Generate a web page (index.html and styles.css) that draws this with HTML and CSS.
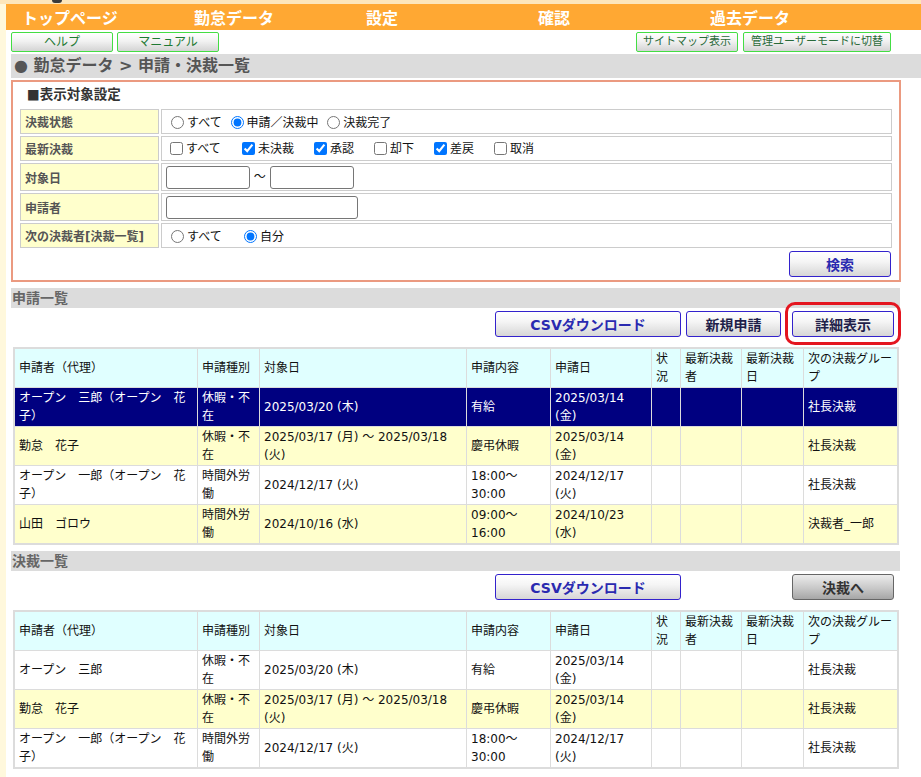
FILE: index.html
```html
<!DOCTYPE html>
<html lang="ja">
<head>
<meta charset="utf-8">
<title>申請・決裁一覧</title>
<link rel="stylesheet" href="styles.css">
</head>
<body>
<div class="topstrip"><span class="logo-tail"></span></div>
<div class="page">
  <nav class="gnav">
    <a href="#">トップページ</a>
    <a href="#">勤怠データ</a>
    <a href="#">設定</a>
    <a href="#">確認</a>
    <a href="#">過去データ</a>
  </nav>
  <div class="content">
    <div class="toolbar">
      <div class="grp">
        <button class="btn-green">ヘルプ</button>
        <button class="btn-green">マニュアル</button>
      </div>
      <div class="grp right">
        <button class="btn-green">サイトマップ表示</button>
        <button class="btn-green wide">管理ユーザーモードに切替</button>
      </div>
    </div>
    <div class="crumb">● 勤怠データ &gt; 申請・決裁一覧</div>

    <div class="filter-box">
      <div class="filter-title">■表示対象設定</div>
      <table class="filter">
        <tr>
          <th>決裁状態</th>
          <td><label><input type="radio" name="st">すべて</label> <label><input type="radio" name="st" checked>申請／決裁中</label> <label><input type="radio" name="st">決裁完了</label></td>
        </tr>
        <tr>
          <th>最新決裁</th>
          <td><label class="opt opt-3"><input type="checkbox">すべて</label><label class="opt opt-3"><input type="checkbox" checked>未決裁</label><label class="opt opt-2"><input type="checkbox" checked>承認</label><label class="opt opt-2"><input type="checkbox">却下</label><label class="opt opt-2"><input type="checkbox" checked>差戻</label><label class="opt opt-2"><input type="checkbox">取消</label></td>
        </tr>
        <tr class="tall">
          <th>対象日</th>
          <td><input type="text" class="txt date"> ～ <input type="text" class="txt date"></td>
        </tr>
        <tr class="tall">
          <th>申請者</th>
          <td><input type="text" class="txt name"></td>
        </tr>
        <tr>
          <th>次の決裁者[決裁一覧]</th>
          <td><label class="opt opt-r"><input type="radio" name="nx">すべて</label><label><input type="radio" name="nx" checked>自分</label></td>
        </tr>
      </table>
      <div class="search-row"><button class="btn-blue w102">検索</button></div>
    </div>

    <div class="sec-bar">申請一覧</div>
    <div class="btn-row">
      <button class="btn-blue w186 gap5">CSVダウンロード</button>
      <button class="btn-blue btn-dark w95 gap11">新規申請</button>
      <button class="btn-blue btn-dark w102">詳細表示</button>
      <span class="highlight"></span>
    </div>
    <table class="list">
      <colgroup>
        <col class="col-name"><col class="col-type"><col class="col-date"><col class="col-content"><col class="col-applied"><col class="col-status"><col class="col-approver"><col class="col-approved"><col class="col-next">
      </colgroup>
      <tr>
        <th>申請者（代理）</th><th>申請種別</th><th>対象日</th><th>申請内容</th><th>申請日</th><th>状況</th><th>最新決裁者</th><th>最新決裁日</th><th>次の決裁グループ</th>
      </tr>
      <tr class="sel">
        <td>オープン　三郎（オープン　花子）</td><td>休暇・不在</td><td>2025/03/20 (木)</td><td>有給</td><td>2025/03/14 (金)</td><td></td><td></td><td></td><td>社長決裁</td>
      </tr>
      <tr class="even">
        <td>勤怠　花子</td><td>休暇・不在</td><td>2025/03/17 (月) ～ 2025/03/18 (火)</td><td>慶弔休暇</td><td>2025/03/14 (金)</td><td></td><td></td><td></td><td>社長決裁</td>
      </tr>
      <tr class="odd">
        <td>オープン　一郎（オープン　花子）</td><td>時間外労働</td><td>2024/12/17 (火)</td><td>18:00～30:00</td><td>2024/12/17 (火)</td><td></td><td></td><td></td><td>社長決裁</td>
      </tr>
      <tr class="even">
        <td>山田　ゴロウ</td><td>時間外労働</td><td>2024/10/16 (水)</td><td>09:00～16:00</td><td>2024/10/23 (水)</td><td></td><td></td><td></td><td>決裁者_一郎</td>
      </tr>
    </table>

    <div class="sec-bar">決裁一覧</div>
    <div class="btn-row">
      <button class="btn-blue w186 gap111">CSVダウンロード</button>
      <button class="btn-gray w102">決裁へ</button>
    </div>
    <table class="list">
      <colgroup>
        <col class="col-name"><col class="col-type"><col class="col-date"><col class="col-content"><col class="col-applied"><col class="col-status"><col class="col-approver"><col class="col-approved"><col class="col-next">
      </colgroup>
      <tr>
        <th>申請者（代理）</th><th>申請種別</th><th>対象日</th><th>申請内容</th><th>申請日</th><th>状況</th><th>最新決裁者</th><th>最新決裁日</th><th>次の決裁グループ</th>
      </tr>
      <tr class="odd">
        <td>オープン　三郎</td><td>休暇・不在</td><td>2025/03/20 (木)</td><td>有給</td><td>2025/03/14 (金)</td><td></td><td></td><td></td><td>社長決裁</td>
      </tr>
      <tr class="even">
        <td>勤怠　花子</td><td>休暇・不在</td><td>2025/03/17 (月) ～ 2025/03/18 (火)</td><td>慶弔休暇</td><td>2025/03/14 (金)</td><td></td><td></td><td></td><td>社長決裁</td>
      </tr>
      <tr class="odd">
        <td>オープン　一郎（オープン　花子）</td><td>時間外労働</td><td>2024/12/17 (火)</td><td>18:00～30:00</td><td>2024/12/17 (火)</td><td></td><td></td><td></td><td>社長決裁</td>
      </tr>
    </table>
  </div>
</div>
</body>
</html>
```

FILE: styles.css
```css
* { box-sizing: border-box; }
html, body { margin: 0; padding: 0; }
body {
  background: #fff8dc;
  font-family: "DejaVu Sans", "Noto Sans CJK JP", sans-serif;
  font-size: 12px;
  color: #111;
  overflow: hidden;
}
button, input { font-family: inherit; }

.topstrip { height: 4px; background: #fde6bb; position: relative; }
.logo-tail {
  position: absolute; left: 52px; top: 0;
  width: 10px; height: 3px; background: #3a3a3a;
  border-radius: 0 0 5px 5px;
}

.page { margin-left: 6px; background: #fff; min-height: 773px; }

.gnav { display: flex; height: 26px; background: #ffa833; }
.gnav a {
  width: 172px; padding: 3px 0 0 16px;
  color: #fff; font-weight: bold; font-size: 16px; line-height: 23px;
  text-decoration: none;
}

.content { padding-left: 5px; }

.toolbar { display: flex; justify-content: space-between; width: 890px; margin-top: 2px; height: 20px; }
.grp { display: flex; gap: 4px; }
.grp.right { margin-right: 10px; gap: 5px; }
.btn-green {
  height: 20px; width: 102px; padding: 0;
  border: 1px solid #44dd44; border-radius: 2px;
  background: linear-gradient(#ffffff, #f2f2f2 45%, #d4d4d4);
  color: #1f7a33; font-size: 12px; line-height: 18px; text-align: center;
}
.grp.right .btn-green { font-size: 11px; color: #2a6a3a; }
.btn-green.wide { width: 148px; }

.crumb {
  margin-top: 2px; height: 24px; background: #dcdcdc;
  color: #555; font-weight: bold; font-size: 16px; line-height: 24px;
  padding-left: 3px;
}

.filter-box { margin-top: 2px; width: 890px; border: 2px solid #eb9a80; padding: 0 5px 3px; }
.filter-title { height: 25px; line-height: 25px; padding-left: 9px; font-weight: bold; font-size: 13.5px; color: #333; }
.filter { width: 100%; border-collapse: separate; border-spacing: 2px; }
.filter th {
  width: 139px; height: 25px; background: #ffffcc; border: 1px solid #ccc;
  text-align: left; font-weight: bold; color: #555; padding: 0 4px; font-size: 12px;
}
.filter td { height: 25px; border: 1px solid #ccc; padding: 0 4px; font-size: 12px; }
.filter tr.tall th, .filter tr.tall td { height: 28px; }
.filter input[type=radio], .filter input[type=checkbox] { vertical-align: -2px; }
.opt { display: inline-block; }
.opt-3 { width: 72px; }
.opt-2 { width: 60px; }
.opt-r { width: 73px; }
.txt { height: 23px; border: 1px solid #767676; border-radius: 3px; padding: 1px 3px; vertical-align: middle; margin: 0; }
.txt.date { width: 84px; }
.txt.name { width: 192px; }
.search-row { display: flex; justify-content: flex-end; padding-right: 3px; margin-top: 1px; }

.btn-blue, .btn-gray {
  height: 26px; padding: 0; border-radius: 3px;
  font-weight: bold; font-size: 14px; text-align: center;
}
.btn-blue {
  border: 1.5px solid #3322cc;
  background: linear-gradient(#ffffff, #f5f5f5 40%, #d6d6d6);
  color: #2a2ab0;
}
.btn-dark { color: #1f1f4a; }
.btn-gray {
  border: 1px solid #666;
  background: linear-gradient(#ececec, #c8c8c8 55%, #a6a6a6);
  color: #333;
}
.w102 { width: 102px; }
.w186 { width: 186px; }
.w95 { width: 95px; }
.gap5 { margin-right: 5px; }
.gap11 { margin-right: 11px; }
.gap111 { margin-right: 111px; }

.sec-bar {
  margin-top: 6px; width: 889px; height: 20px; background: #dcdcdc;
  color: #666; font-weight: bold; font-size: 14px; line-height: 20px; padding-left: 1px;
}
.btn-row { position: relative; display: flex; justify-content: flex-end; width: 883px; margin-top: 3px; height: 26px; }
.highlight {
  position: absolute; left: 774px; top: -9px; width: 116px; height: 43px;
  border: 3px solid #e4151f; border-radius: 10px;
}

.list {
  margin: 10px 0 0 2px; width: 886px; table-layout: fixed;
  border-collapse: separate; border-spacing: 1px;
  background: #dcdcdc; border: 1px solid #dcdcdc;
}
.list th, .list td {
  padding: 1px 4px; line-height: 18px; text-align: left;
  font-weight: normal; vertical-align: middle; font-size: 12px; color: #111;
}
.list th { background: #e0ffff; }
.list tr.odd td { background: #ffffff; }
.list tr.even td { background: #ffffcc; }
.list tr.sel td { background: #000080; color: #fff; }
.col-name { width: 182px; }
.col-type { width: 61px; }
.col-date { width: 206px; }
.col-content { width: 83px; }
.col-applied { width: 100px; }
.col-status { width: 28px; }
.col-approver { width: 60px; }
.col-approved { width: 61px; }
.col-next { width: 93px; }
```
